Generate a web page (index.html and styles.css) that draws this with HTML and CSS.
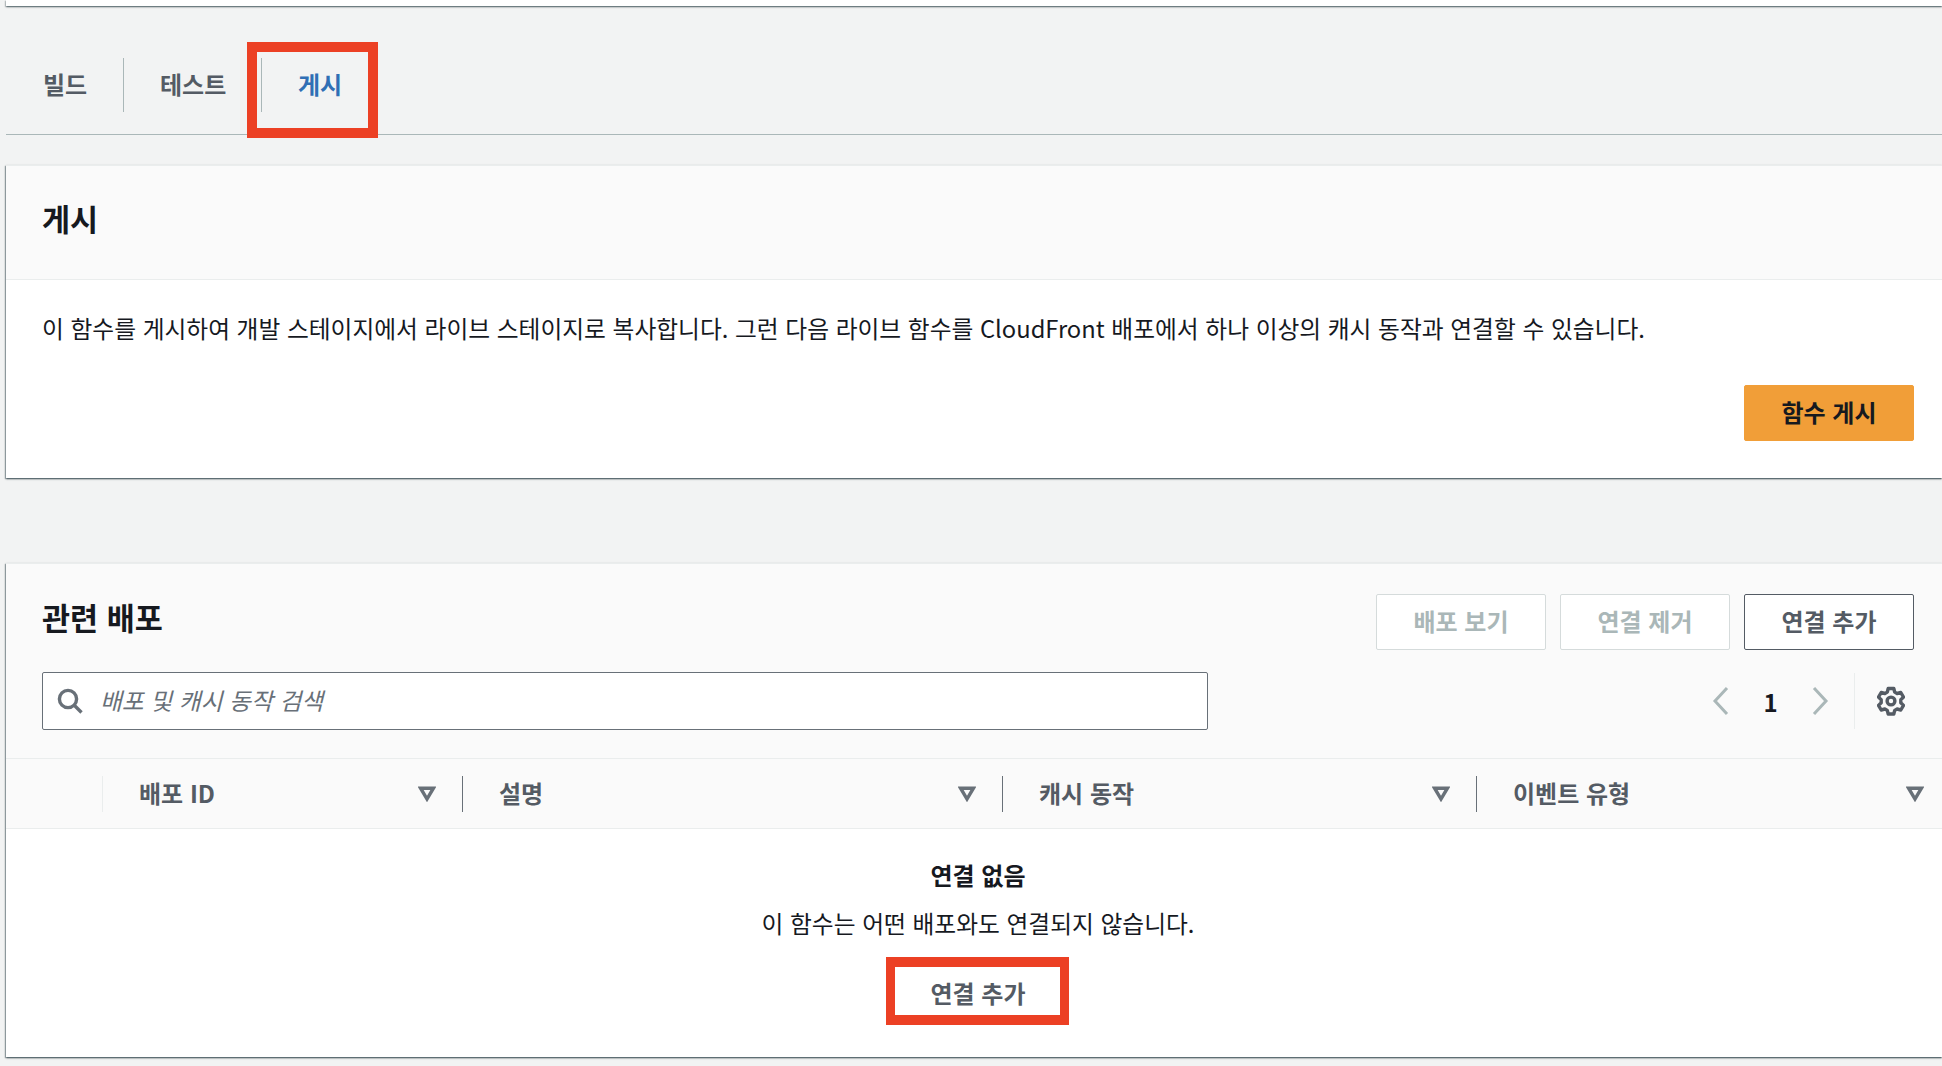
FILE: index.html
```html
<!DOCTYPE html>
<html lang="ko">
<head>
<meta charset="utf-8">
<title>게시</title>
<link rel="stylesheet" href="styles.css">
</head>
<body>
<div class="page">
  <div class="top-strip"></div>
  <nav class="tabs">
    <div class="tab tab-first">빌드</div>
    <div class="tab tab-second">테스트</div>
    <div class="tab tab-active">게시</div>
  </nav>
  <section class="card card-publish">
    <header class="publish-head"><h2>게시</h2></header>
    <div class="publish-body">
      <p>이 함수를 게시하여 개발 스테이지에서 라이브 스테이지로 복사합니다. 그런 다음 라이브 함수를 CloudFront 배포에서 하나 이상의 캐시 동작과 연결할 수 있습니다.</p>
      <div class="publish-actions"><button class="btn btn-primary">함수 게시</button></div>
    </div>
  </section>
  <section class="card card-assoc">
    <header class="assoc-head">
      <div class="assoc-title-row">
        <h2>관련 배포</h2>
        <div class="btn-group">
          <button class="btn btn-disabled">배포 보기</button>
          <button class="btn btn-disabled">연결 제거</button>
          <button class="btn btn-normal">연결 추가</button>
        </div>
      </div>
      <div class="filter-row">
        <div class="search">
          <svg class="search-icon" viewBox="0 0 26 26" width="26" height="26"><circle cx="11" cy="11" r="8.6" fill="none" stroke="#687078" stroke-width="3.4"/><path d="M17 17l7.5 7.5" stroke="#687078" stroke-width="3.4" fill="none"/></svg>
          <span class="placeholder">배포 및 캐시 동작 검색</span>
        </div>
        <div class="pager">
          <svg class="chev" viewBox="0 0 18 32" width="18" height="32"><path d="M16 3L4 16l12 13" fill="none" stroke="#aab7b8" stroke-width="3"/></svg>
          <span class="page-num">1</span>
          <svg class="chev" viewBox="0 0 18 32" width="18" height="32"><path d="M2 3l12 13L2 29" fill="none" stroke="#aab7b8" stroke-width="3"/></svg>
          <div class="pager-settings">
            <svg viewBox="0 0 28 30" width="28" height="30"><path d="M11.2 2.5h5.6l.9 3.6 2.4 1.4 3.7-1 2.7 4.6-2.7 2.7v2.9l2.7 2.7-2.7 4.6-3.7-1-2.4 1.4-.9 3.6h-5.6l-.9-3.6-2.4-1.4-3.7 1-2.7-4.6 2.7-2.7v-2.9l-2.7-2.7 2.7-4.6 3.7 1 2.4-1.4z" fill="none" stroke="#545b64" stroke-width="3.4" stroke-linejoin="round"/><circle cx="14" cy="15" r="3.9" fill="none" stroke="#545b64" stroke-width="3.4"/></svg>
          </div>
        </div>
      </div>
    </header>
    <div class="thead">
      <div class="th th-select"></div>
      <div class="th th-id"><span>배포 ID</span><svg class="sort" viewBox="0 0 18 16" width="18" height="16"><path d="M2.6 2.2h12.8L9 13z" fill="none" stroke="#687078" stroke-width="3.4"/></svg></div>
      <div class="th th-desc"><span>설명</span><svg class="sort" viewBox="0 0 18 16" width="18" height="16"><path d="M2.6 2.2h12.8L9 13z" fill="none" stroke="#687078" stroke-width="3.4"/></svg></div>
      <div class="th th-cache"><span>캐시 동작</span><svg class="sort" viewBox="0 0 18 16" width="18" height="16"><path d="M2.6 2.2h12.8L9 13z" fill="none" stroke="#687078" stroke-width="3.4"/></svg></div>
      <div class="th th-event"><span>이벤트 유형</span><svg class="sort" viewBox="0 0 18 16" width="18" height="16"><path d="M2.6 2.2h12.8L9 13z" fill="none" stroke="#687078" stroke-width="3.4"/></svg></div>
    </div>
    <div class="empty">
      <div class="empty-title">연결 없음</div>
      <div class="empty-text">이 함수는 어떤 배포와도 연결되지 않습니다.</div>
      <div class="empty-action">연결 추가</div>
    </div>
  </section>
  <div class="mark mark-tab"></div>
  <div class="mark mark-add"></div>
</div>
</body>
</html>
```
FILE: styles.css
```css
* { box-sizing: border-box; }
html, body { margin: 0; padding: 0; }
body {
  background: #f2f3f3;
  font-family: "Noto Sans CJK KR", "Noto Sans", sans-serif;
  color: #16191f;
  font-size: 23.74px;
}
.page {
  position: relative;
  width: 1942px;
  height: 1066px;
  overflow: hidden;
  display: flex;
  flex-direction: column;
  padding-left: 6px;
}
.top-strip {
  height: 6px;
  background: #fff;
  box-shadow: 0 1px 2px 0 rgba(0,28,36,.5), 1px 1px 1px 0 rgba(0,28,36,.15), -1px 1px 1px 0 rgba(0,28,36,.15);
  flex: none;
}
.tabs {
  display: flex;
  align-items: center;
  height: 129px;
  padding-top: 29px;
  border-bottom: 1px solid #aab7b8;
  flex: none;
}
.tab {
  font-weight: 700;
  font-size: 24px;
  color: #545b64;
  height: 54px;
  padding-bottom: 3px;
  display: flex;
  align-items: center;
}
.tab-first { width: 118px; padding-left: 37px; border-right: 1px solid #aab7b8; }
.tab-second { width: 138px; padding-left: 36px; border-right: 1px solid #aab7b8; }
.tab-active { padding-left: 36px; color: #2f6fb5; }
.card {
  background: #fff;
  box-shadow: 0 1px 2px 0 rgba(0,28,36,.5), 1px 1px 1px 0 rgba(0,28,36,.15), -1px 1px 1px 0 rgba(0,28,36,.3);
  flex: none;
}
.card-publish { margin-top: 30px; height: 313px; }
.publish-head {
  height: 115px;
  background: #fafafa;
  border-top: 1px solid #eaeded;
  border-bottom: 1px solid #eaeded;
  display: flex;
  align-items: center;
  padding-left: 36px;
}
h2 { margin: 0; padding-bottom: 8px; font-size: 30.5px; font-weight: 700; line-height: 1.2; color: #16191f; }
.publish-body { padding: 23px 28px 0 36px; }
.publish-body p { margin: 0; font-size: 23.74px; line-height: 50px; }
.publish-actions { display: flex; justify-content: flex-end; margin-top: 32px; }
.btn {
  font-family: inherit;
  font-size: 24px;
  font-weight: 700;
  width: 170px;
  height: 56px;
  padding: 0 0 4px;
  border-radius: 2px;
  background: #fff;
}
.btn-primary { background: #f19e38; border: 1px solid #f19e38; color: #16191f; }
.btn-disabled { border: 1px solid #d5dbdb; color: #aab7b8; }
.btn-normal { border: 1px solid #545b64; color: #545b64; }
.card-assoc { margin-top: 85px; height: 494px; }
.assoc-head {
  height: 195px;
  background: #fafafa;
  border-top: 1px solid #eaeded;
  padding: 30px 28px 0 36px;
}
.assoc-title-row { display: flex; justify-content: space-between; align-items: center; height: 56px; }
.assoc-title-row h2 { padding-bottom: 10px; }
.btn-group { display: flex; gap: 14px; }
.filter-row { display: flex; justify-content: space-between; margin-top: 22px; height: 58px; }
.search {
  width: 1166px;
  height: 58px;
  background: #fff;
  border: 1px solid #687078;
  border-radius: 2px;
  display: flex;
  align-items: center;
  padding-left: 14px;
}
.search-icon { flex: none; }
.placeholder { margin-left: 17px; padding-bottom: 4px; font-style: italic; font-size: 23.74px; color: #687078; }
.pager { display: flex; align-items: center; }
.page-num { width: 83px; text-align: center; font-weight: 700; font-size: 24px; }
.pager-settings {
  margin-left: 24px;
  padding-left: 22px;
  padding-right: 9px;
  height: 56px;
  border-left: 1px solid #eaeded;
  display: flex;
  align-items: center;
}
.thead {
  display: flex;
  align-items: center;
  height: 71px;
  background: #fafafa;
  border-top: 1px solid #eaeded;
  border-bottom: 1px solid #eaeded;
}
.th {
  height: 36px;
  display: flex;
  align-items: center;
  justify-content: space-between;
  border-right: 1px solid #687078;
  font-weight: 700;
  font-size: 24px;
  color: #545b64;
  padding-left: 36px;
  padding-right: 26px;
  flex: none;
}
.th span { padding-bottom: 2px; }
.th-select { width: 97px; padding: 0; border-right-color: #eaeded; }
.th-id { width: 360px; }
.th-desc { width: 540px; }
.th-cache { width: 474px; }
.th-event { flex: 1; border-right: none; padding-right: 18px; }
.empty {
  text-align: center;
  padding: 26px 0 0 8px;
}
.empty-title { font-weight: 700; font-size: 24px; line-height: 40px; }
.empty-text { font-size: 23.74px; line-height: 40px; margin-top: 8px; }
.empty-action { font-weight: 700; font-size: 24px; color: #545b64; line-height: 40px; margin-top: 30px; }
.mark { position: absolute; border: solid #ec4024; }
.mark-tab { left: 247px; top: 42px; width: 131px; height: 96px; border-width: 10px; }
.mark-add { left: 886px; top: 957px; width: 183px; height: 68px; border-width: 10px 9px; }
```
